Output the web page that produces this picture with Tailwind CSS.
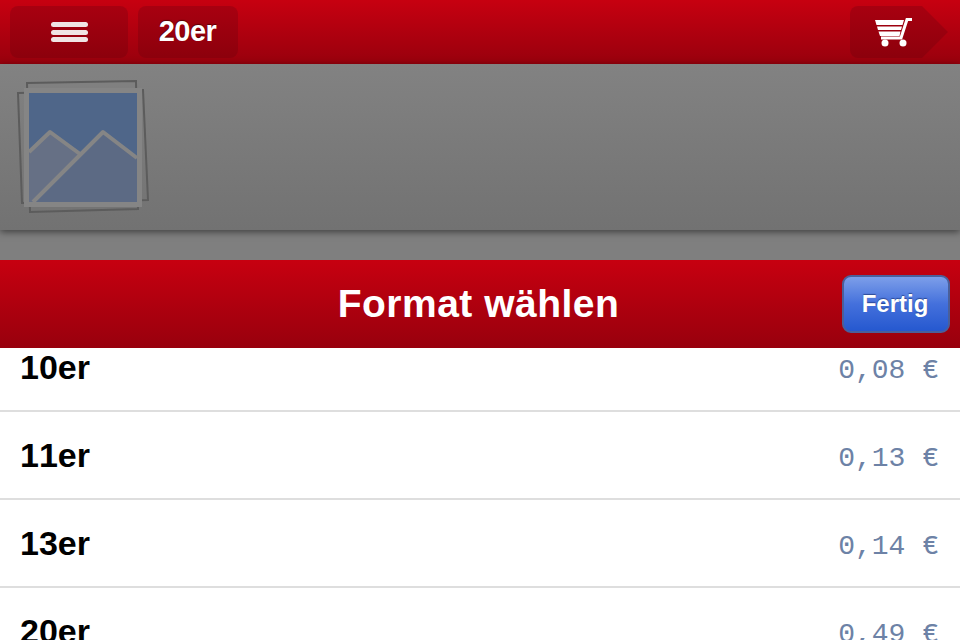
<!DOCTYPE html>
<html lang="de">
<head>
  <meta charset="UTF-8" />
  <meta name="viewport" content="width=device-width, initial-scale=1.0"/>
  <title>Format wählen</title>
  <script src="https://cdn.jsdelivr.net/npm/@tailwindcss/browser@4"></script>
</head>
<body class="w-[960px] h-[640px] overflow-hidden bg-white font-['Liberation_Sans',sans-serif] [font-kerning:none]">
  <!-- top bar -->
  <header class="h-[64px] flex items-center justify-between pl-[10px] pr-[11px] bg-gradient-to-b from-[#c70010] to-[#98000d]">
    <div class="flex gap-[10px]">
      <button class="w-[118px] h-[52px] rounded-[8px] bg-gradient-to-b from-[#a80010] to-[#8c000c] flex items-center justify-center">
        <span class="flex flex-col gap-[2.5px]">
          <span class="block w-[37px] h-[5px] rounded-full bg-[#f0e4e4]"></span>
          <span class="block w-[37px] h-[5px] rounded-full bg-[#f0e4e4]"></span>
          <span class="block w-[37px] h-[5px] rounded-full bg-[#f0e4e4]"></span>
        </span>
      </button>
      <button class="w-[100px] h-[52px] rounded-[8px] bg-gradient-to-b from-[#a80010] to-[#8c000c] text-white text-[29px] font-bold tracking-[-0.5px] pr-[1px] [text-shadow:0_-1px_1px_rgba(60,0,0,0.7)]">20er</button>
    </div>
    <svg width="99" height="52" viewBox="850 6 99 52">
      <defs>
        <linearGradient id="cartBg" x1="0" y1="0" x2="0" y2="1">
          <stop offset="0" stop-color="#a80010"/>
          <stop offset="1" stop-color="#8c000c"/>
        </linearGradient>
      </defs>
      <path d="M858 6H922L948 32L922 58H858A8 8 0 0 1 850 50V14A8 8 0 0 1 858 6Z" fill="url(#cartBg)"/>
      <g fill="#fff">
        <path d="M875 20H904L902.500 25H876.500Z"/>
        <path d="M877 26.500H902L901 30H878Z"/>
        <path d="M878.500 31.500H900.500L899.500 36H880Z"/>
        <circle cx="885" cy="43" r="3.500"/>
        <circle cx="903" cy="43" r="3.500"/>
      </g>
      <path d="M881 38H901L907 19.500H912" fill="none" stroke="#fff" stroke-width="3"/>
    </svg>
  </header>

  <!-- dimmed content -->
  <section class="h-[196px] bg-[#7f7f7f]">
    <div class="h-[166px] pl-[14px] pt-[16px] bg-gradient-to-b from-[#828282] to-[#727272] shadow-[0_2px_7px_rgba(0,0,0,0.5)]">
      <svg width="140" height="140" viewBox="14 80 140 140">
        <path d="M27 83L136 81L138 209L30 212Z" fill="none" stroke="#5c5c5c" stroke-width="2"/>
        <path d="M18 93L143 90L148 200L22 203Z" fill="none" stroke="#5c5c5c" stroke-width="2"/>
        <rect x="26.500" y="90.500" width="113" height="114" fill="#4f6689" stroke="#858585" stroke-width="5"/>
        <path d="M29 152L50 132L80 154L33 202H29Z" fill="#667085"/>
        <path d="M33 202L103 132L137 158V202Z" fill="#5c6a84"/>
        <path d="M29 152L50 132L80 154M33 202L103 132L137 158" fill="none" stroke="#858585" stroke-width="4" stroke-linejoin="round"/>
      </svg>
    </div>
  </section>

  <!-- picker -->
  <div class="h-[88px] relative flex items-center justify-center bg-gradient-to-b from-[#c70010] to-[#98000d]">
    <h1 class="text-white text-[39px] font-bold tracking-[0.5px] pr-[3px]">Format wählen</h1>
    <button class="absolute right-[10px] top-[15px] w-[108px] h-[58px] rounded-[9px] border-2 border-[#4a5f9a] bg-gradient-to-b from-[#7d9ee9] via-[#4470dc] to-[#2558cf] text-white text-[24px] font-bold pr-[2px] [text-shadow:0_-1px_1px_rgba(20,40,100,0.6)]">Fertig</button>
  </div>

  <div class="h-[292px] overflow-hidden">
    <ul class="-mt-[24px]">
      <li class="h-[88px] border-b-2 border-[#dedede] flex items-center justify-between pl-[20px] pr-[21px]">
        <span class="text-[34px] font-bold text-black">10er</span>
        <span class="pt-[7px] font-['Liberation_Mono',monospace] text-[28px] text-[#6d82a6]">0,08 €</span>
      </li>
      <li class="h-[88px] border-b-2 border-[#dedede] flex items-center justify-between pl-[20px] pr-[21px]">
        <span class="text-[34px] font-bold text-black">11er</span>
        <span class="pt-[7px] font-['Liberation_Mono',monospace] text-[28px] text-[#6d82a6]">0,13 €</span>
      </li>
      <li class="h-[88px] border-b-2 border-[#dedede] flex items-center justify-between pl-[20px] pr-[21px]">
        <span class="text-[34px] font-bold text-black">13er</span>
        <span class="pt-[7px] font-['Liberation_Mono',monospace] text-[28px] text-[#6d82a6]">0,14 €</span>
      </li>
      <li class="h-[88px] border-b-2 border-[#dedede] flex items-center justify-between pl-[20px] pr-[21px]">
        <span class="text-[34px] font-bold text-black">20er</span>
        <span class="pt-[7px] font-['Liberation_Mono',monospace] text-[28px] text-[#6d82a6]">0,49 €</span>
      </li>
    </ul>
  </div>
</body>
</html>
